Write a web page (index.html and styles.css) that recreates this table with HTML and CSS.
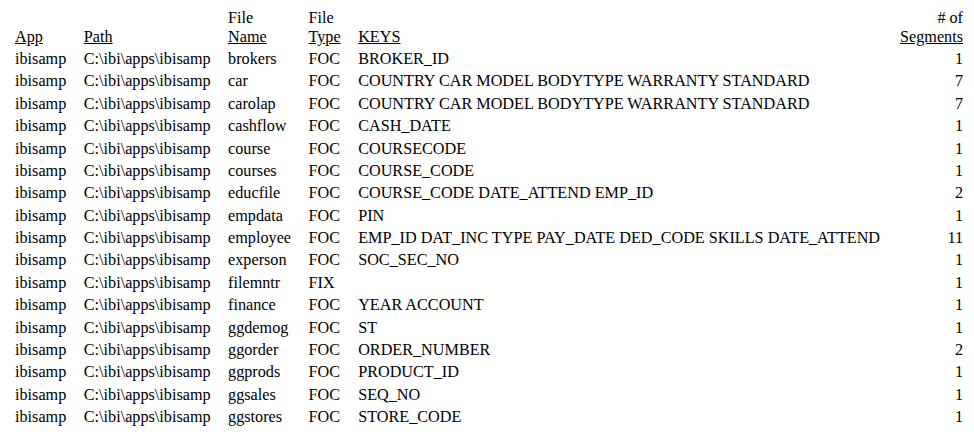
FILE: index.html
```html
<!DOCTYPE html>
<html>
<head>
<meta charset="utf-8">
<link rel="stylesheet" href="styles.css">
</head>
<body>
<table class="report">
<thead>
<tr>
<th><span class="u">App</span></th>
<th><span class="u">Path</span></th>
<th>File<br><span class="u">Name</span></th>
<th>File<br><span class="u">Type</span></th>
<th class="keys"><span class="u">KEYS</span></th>
<th class="num"># of<br><span class="u">Segments</span></th>
</tr>
</thead>
<tbody>
<tr><td>ibisamp</td><td>C:\ibi\apps\ibisamp</td><td>brokers</td><td>FOC</td><td>BROKER_ID</td><td class="num">1</td></tr>
<tr><td>ibisamp</td><td>C:\ibi\apps\ibisamp</td><td>car</td><td>FOC</td><td>COUNTRY CAR MODEL BODYTYPE WARRANTY STANDARD</td><td class="num">7</td></tr>
<tr><td>ibisamp</td><td>C:\ibi\apps\ibisamp</td><td>carolap</td><td>FOC</td><td>COUNTRY CAR MODEL BODYTYPE WARRANTY STANDARD</td><td class="num">7</td></tr>
<tr><td>ibisamp</td><td>C:\ibi\apps\ibisamp</td><td>cashflow</td><td>FOC</td><td>CASH_DATE</td><td class="num">1</td></tr>
<tr><td>ibisamp</td><td>C:\ibi\apps\ibisamp</td><td>course</td><td>FOC</td><td>COURSECODE</td><td class="num">1</td></tr>
<tr><td>ibisamp</td><td>C:\ibi\apps\ibisamp</td><td>courses</td><td>FOC</td><td>COURSE_CODE</td><td class="num">1</td></tr>
<tr><td>ibisamp</td><td>C:\ibi\apps\ibisamp</td><td>educfile</td><td>FOC</td><td>COURSE_CODE DATE_ATTEND EMP_ID</td><td class="num">2</td></tr>
<tr><td>ibisamp</td><td>C:\ibi\apps\ibisamp</td><td>empdata</td><td>FOC</td><td>PIN</td><td class="num">1</td></tr>
<tr><td>ibisamp</td><td>C:\ibi\apps\ibisamp</td><td>employee</td><td>FOC</td><td>EMP_ID DAT_INC TYPE PAY_DATE DED_CODE SKILLS DATE_ATTEND</td><td class="num">11</td></tr>
<tr><td>ibisamp</td><td>C:\ibi\apps\ibisamp</td><td>experson</td><td>FOC</td><td>SOC_SEC_NO</td><td class="num">1</td></tr>
<tr><td>ibisamp</td><td>C:\ibi\apps\ibisamp</td><td>filemntr</td><td>FIX</td><td></td><td class="num">1</td></tr>
<tr><td>ibisamp</td><td>C:\ibi\apps\ibisamp</td><td>finance</td><td>FOC</td><td>YEAR ACCOUNT</td><td class="num">1</td></tr>
<tr><td>ibisamp</td><td>C:\ibi\apps\ibisamp</td><td>ggdemog</td><td>FOC</td><td>ST</td><td class="num">1</td></tr>
<tr><td>ibisamp</td><td>C:\ibi\apps\ibisamp</td><td>ggorder</td><td>FOC</td><td>ORDER_NUMBER</td><td class="num">2</td></tr>
<tr><td>ibisamp</td><td>C:\ibi\apps\ibisamp</td><td>ggprods</td><td>FOC</td><td>PRODUCT_ID</td><td class="num">1</td></tr>
<tr><td>ibisamp</td><td>C:\ibi\apps\ibisamp</td><td>ggsales</td><td>FOC</td><td>SEQ_NO</td><td class="num">1</td></tr>
<tr><td>ibisamp</td><td>C:\ibi\apps\ibisamp</td><td>ggstores</td><td>FOC</td><td>STORE_CODE</td><td class="num">1</td></tr>
</tbody>
</table>
</body>
</html>
```
FILE: styles.css
```css
html, body {
  background: #ffffff;
}
body {
  margin: 6px 8px 8px 8px;
  font-family: "Liberation Serif", "Times New Roman", serif;
  font-size: 16.2px;
  line-height: 19px;
  color: #000000;
}
.report {
  width: 100%;
  border-collapse: separate;
  border-spacing: 2px;
}
.report th,
.report td {
  padding: 0.6875px 10.5px 0.6875px 5px;
  text-align: left;
  font-weight: normal;
  white-space: nowrap;
}
.report th {
  vertical-align: bottom;
}
.report td {
  vertical-align: middle;
}
.report .keys {
  width: 100%;
}
.report .num {
  text-align: right;
  padding-right: 1px;
}
.u {
  text-decoration: underline;
}
```
